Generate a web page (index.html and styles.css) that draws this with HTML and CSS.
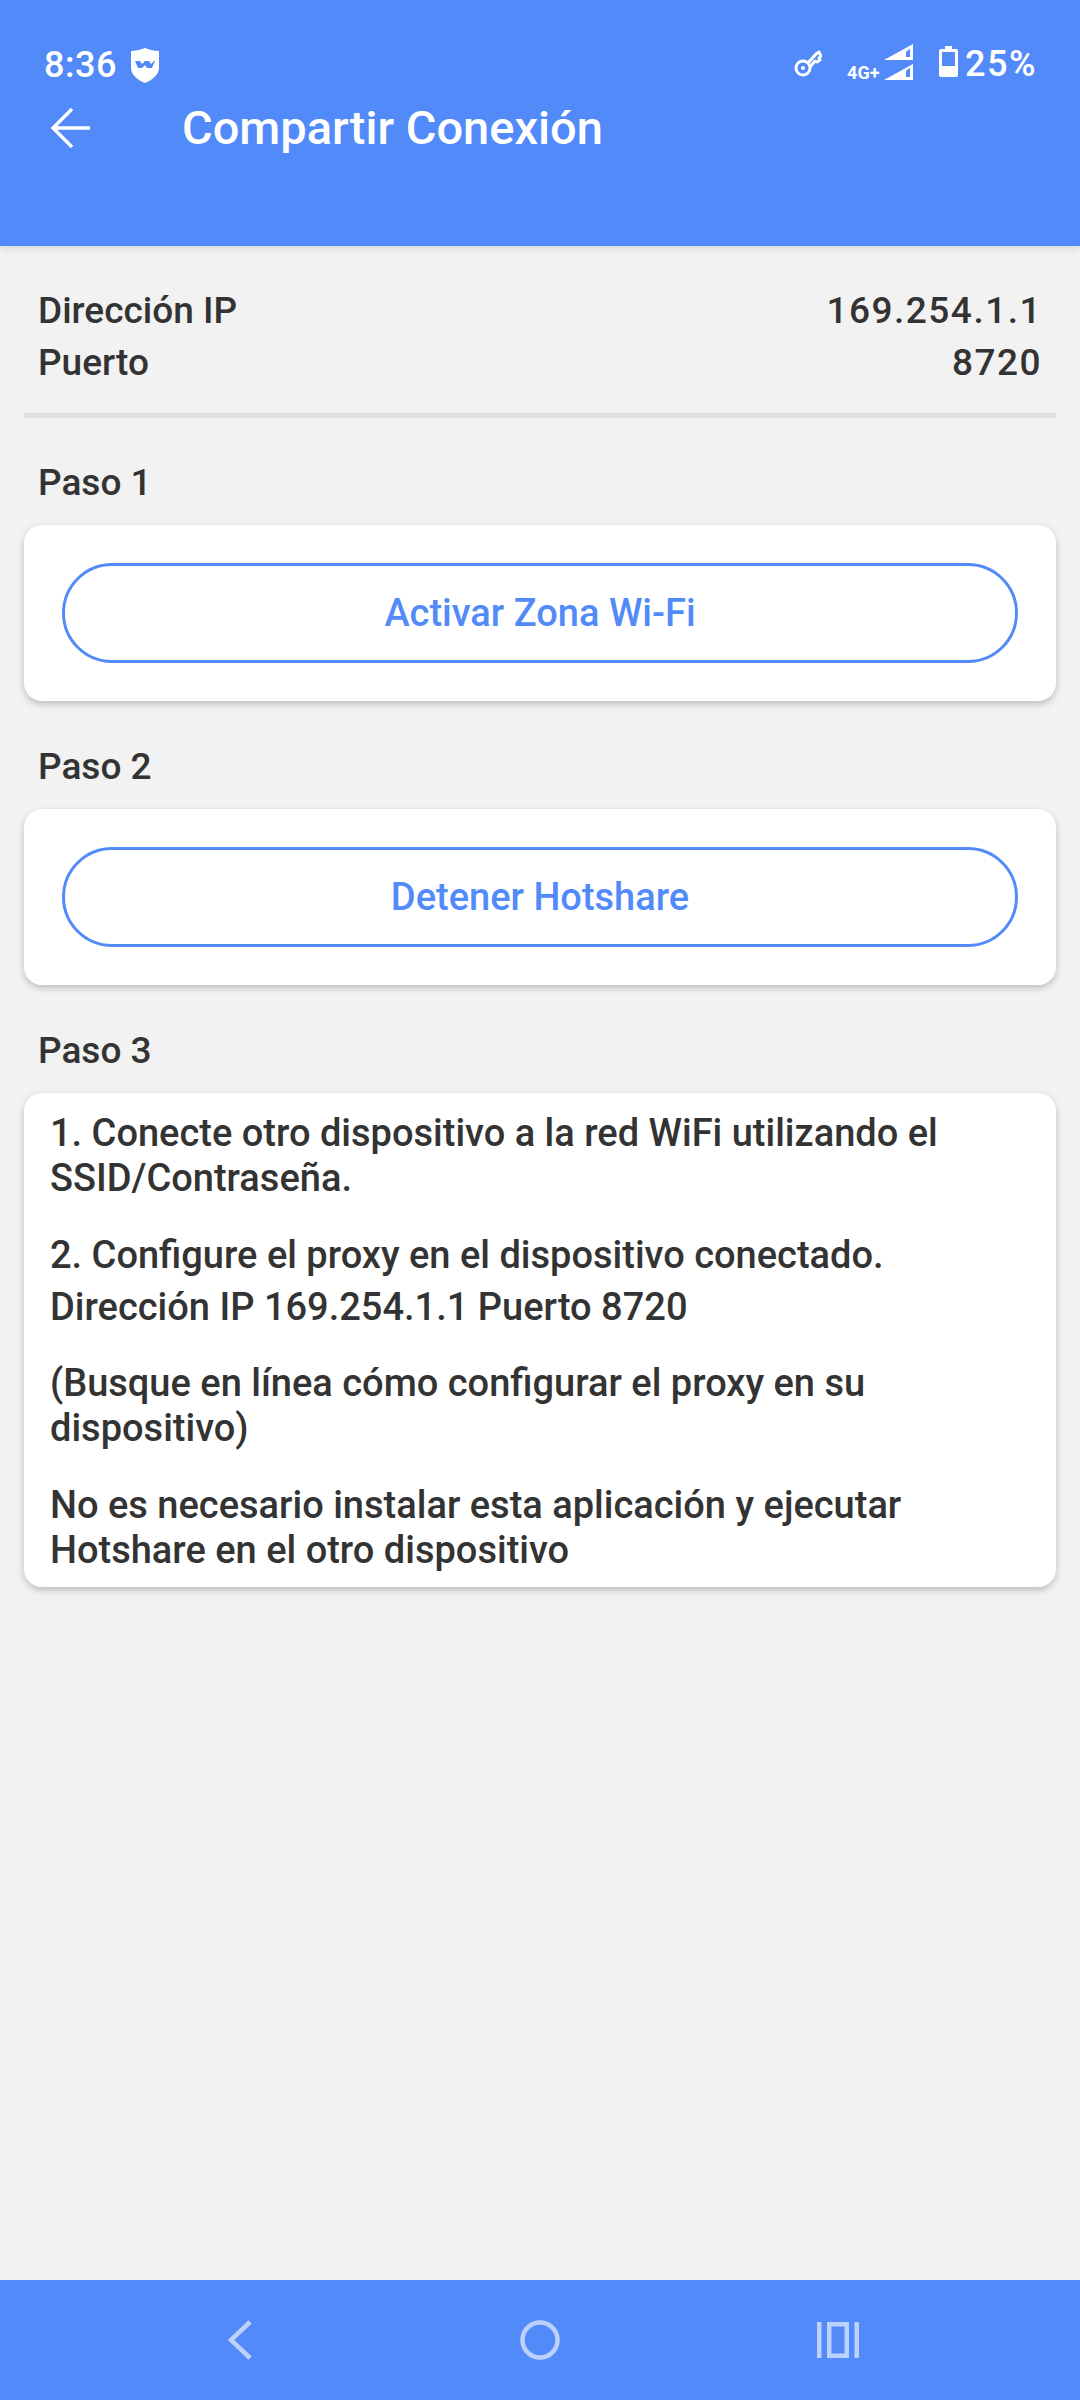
FILE: index.html
```html
<!DOCTYPE html>
<html lang="es">
<head>
<meta charset="utf-8">
<title>Compartir Conexión</title>
<link rel="stylesheet" href="styles.css">
</head>
<body>
<div class="app">
  <header class="top">
    <div class="status">
      <div class="status-left">
        <span class="time">8:36</span>
        <svg class="shield" viewBox="0 0 28 35"><path fill="#fff" d="M14 0 C19 2 24 3 28 3 V20 C28 27 21 32 14 35 C7 32 0 27 0 20 V3 C4 3 9 2 14 0Z"/><path fill="#528bf9" d="M4 13h5l2 3 3-3h4l2 3 3-3h1l-3 7h-5l-2-3-3 3H7z"/></svg>
      </div>
      <div class="status-right">
        <svg class="key" viewBox="0 0 28 27"><g fill="none" stroke="#fff" stroke-width="3" stroke-linejoin="round"><circle cx="9" cy="18" r="7"/><path d="M14 13 L22 4 L25 2 L27 6 L25 8 L26 10 L23 12 L21 11 L16 17"/></g><circle cx="9" cy="18" r="2" fill="#fff"/></svg>
        <span class="net">4G+</span>
        <svg class="signal" viewBox="0 0 29 36"><path fill="#fff" d="M29 0V16H0Z"/><path fill="#528bf9" d="M22 8V13H26V4.5Z"/><path fill="#fff" d="M29 20V36H0Z"/><path fill="#528bf9" d="M22 27V33H26V23.5Z"/></svg>
        <svg class="battery" viewBox="0 0 19 31"><path fill="#fff" fill-rule="evenodd" d="M6 0h7v3h4a2 2 0 0 1 2 2v24a2 2 0 0 1-2 2H2a2 2 0 0 1-2-2V5a2 2 0 0 1 2-2h4zM3 6v14h13V6z"/></svg>
        <span class="pct">25%</span>
      </div>
    </div>
    <div class="toolbar">
      <svg class="arrow" viewBox="0 0 40 40"><path fill="none" stroke="#fff" stroke-width="3.4" d="M40 20H3M22 1 3 20l19 19"/></svg>
      <h1 class="title">Compartir Conexión</h1>
    </div>
  </header>

  <main class="content">
    <section class="info">
      <div class="info-row"><span>Dirección IP</span><span class="num">169.254.1.1</span></div>
      <div class="info-row"><span>Puerto</span><span class="num">8720</span></div>
    </section>
    <hr class="rule">

    <h2 class="step">Paso 1</h2>
    <div class="card card-btn"><button class="pill">Activar Zona Wi-Fi</button></div>

    <h2 class="step">Paso 2</h2>
    <div class="card card-btn"><button class="pill">Detener Hotshare</button></div>

    <h2 class="step">Paso 3</h2>
    <div class="card card-text">
      <p class="para">1. Conecte otro dispositivo a la red WiFi utilizando el SSID/Contraseña.</p>
      <p class="para para-wide">2. Configure el proxy en el dispositivo conectado.<br>Dirección IP 169.254.1.1 Puerto 8720</p>
      <p class="para">(Busque en línea cómo configurar el proxy en su dispositivo)</p>
      <p class="para">No es necesario instalar esta aplicación y ejecutar Hotshare en el otro dispositivo</p>
    </div>
  </main>

  <nav class="nav">
    <svg class="nav-icon" viewBox="0 0 42 40"><path fill="none" stroke="#bcd2fd" stroke-width="4.5" d="M32 2 13 20l19 18" transform="translate(-3 0)"/></svg>
    <svg class="nav-icon" viewBox="0 0 42 40"><circle cx="21" cy="20" r="17.5" fill="none" stroke="#bcd2fd" stroke-width="4.5"/></svg>
    <svg class="nav-icon" viewBox="0 0 42 40"><path fill="#bcd2fd" fill-rule="evenodd" d="M0 2h4.500v36H0zM37.500 2H42v36h-4.500zM10 2h22v36H10zM14.500 6.500v27h13v-27z"/></svg>
  </nav>
</div>
</body>
</html>
```

FILE: styles.css
```css
* { box-sizing: border-box; }
html, body { margin: 0; padding: 0; }
body {
  width: 1080px;
  height: 2400px;
  background: #f2f2f2;
  font-family: "Roboto", "Liberation Sans", sans-serif;
  color: #333;
  overflow: hidden;
}
.app { display: flex; flex-direction: column; height: 2400px; }

.top {
  height: 246px;
  background: #528bf9;
  color: #fff;
  box-shadow: 0 2px 8px rgba(0,0,0,.12);
  flex: none;
}
.status {
  height: 80px;
  padding: 44px 43px 0 44px;
  display: flex;
  justify-content: space-between;
  align-items: flex-start;
}
.status-left { display: flex; align-items: center; gap: 14px; margin-top: 3px; }
.time { font-size: 36px; line-height: 36px; font-weight: 500; letter-spacing: .5px; }
.shield { width: 28px; height: 35px; }
.status-right { display: flex; position: relative; align-items: flex-start; }
.key { width: 28px; height: 27px; margin: 6px 25px 0 0; }
.net { font: 700 18px/16px "Roboto", sans-serif; margin: 21px 3px 0 0; width: 34px; }
.signal { width: 29px; height: 36px; margin-right: 26px; }
.battery { width: 19px; height: 31px; margin: 2px 7px 0 0; }
.pct { font-size: 36px; line-height: 36px; font-weight: 500; letter-spacing: 1.5px; margin-top: 2px; }

.toolbar { display: flex; align-items: center; height: 96px; padding: 0 0 0 50px; margin-top: 0; }
.arrow { width: 40px; height: 40px; margin-right: 92px; }
.title { margin: 0; font-size: 47px; line-height: 56px; font-weight: 500; letter-spacing: 0; }

.content { flex: 1; padding: 39px 24px 0; }
.info-row {
  display: flex;
  justify-content: space-between;
  padding: 0 14px;
  font-size: 37px;
  line-height: 52px;
  font-weight: 500;
}
.num { letter-spacing: 1.5px; }
.rule { border: 0; height: 5px; background: #dfdfdf; margin: 24px 0 0; }
.step { margin: 39px 14px 16px; font-size: 37px; line-height: 52px; font-weight: 500; }
.rule + .step { margin-top: 39px; }
.card {
  background: #fff;
  border-radius: 18px;
  box-shadow: 0 3px 7px rgba(0,0,0,.22);
}
.card-btn { padding: 38px 38px; }
.pill {
  display: block;
  width: 100%;
  height: 100px;
  border: 3px solid #528bf9;
  border-radius: 50px;
  background: #fff;
  color: #528bf9;
  font: 500 38px/50px "Roboto", sans-serif;
}
.card + .step { margin-top: 40px; }
.card-text { padding: 18px 26px 14px; }
.para { margin: 0 0 32px; font-size: 38px; line-height: 45px; font-weight: 500; }
.para:last-child { margin-bottom: 0; }
.para-wide { line-height: 52px; margin-top: -4px; margin-bottom: 28px; }

.nav {
  height: 120px;
  flex: none;
  background: #528bf9;
  display: flex;
  justify-content: center;
  align-items: center;
  gap: 256px;
}
.nav-icon { width: 42px; height: 40px; }
```
